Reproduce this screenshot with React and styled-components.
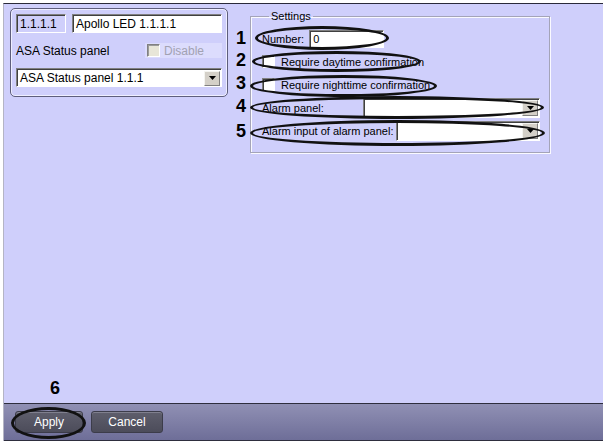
import React from "react"
import styled, { createGlobalStyle } from "styled-components"

const GlobalStyle = createGlobalStyle`
  html, body {
    margin: 0;
    padding: 0;
    background: #fff;
  }
  body {
    font-family: "Liberation Sans", Arial, sans-serif;
    font-size: 11px;
    color: #000;
  }
`

/* --- Frame --- */
const Frame = styled.div`
  margin: 3px 0 0 3px;
  width: 600px;
  height: 438px;
  display: flex;
  flex-direction: column;
  border-top: 1px solid #2a2a3a;
  border-left: 1px solid #b4b4c4;
  box-sizing: border-box;
`
const Main = styled.div`
  flex: 1;
  background: #cfcffb;
  display: flex;
  align-items: flex-start;
  gap: 22px;
  padding: 4px 0 0 6px;
`
const BottomBar = styled.div`
  height: 38px;
  box-sizing: border-box;
  border-top: 1px solid #2e2e3e;
  border-bottom: 1px solid #2e2e3e;
  background: linear-gradient(#9090b4, #6e6e98);
  display: flex;
  align-items: flex-start;
  gap: 8px;
  padding: 7px 0 0 11px;
`

/* --- Object panel (top left) --- */
const ObjectPanel = styled.div`
  width: 218px;
  box-sizing: border-box;
  border: 1px solid #5e5e7c;
  border-radius: 5px;
  box-shadow: inset 0 0 0 1px #eeeeff;
  padding: 5px 5px 9px 5px;
  display: flex;
  flex-direction: column;
  gap: 10px;
`
const PanelRow = styled.div`
  display: flex;
  align-items: center;
  gap: ${p => p.$gap || 0}px;
  justify-content: ${p => p.$between ? "space-between" : "flex-start"};
`
const PanelLabel = styled.span`
  white-space: nowrap;
  font-size: 12px;
`
const TextBox = styled.div`
  width: ${p => p.$w}px;
  height: ${p => p.$h || 19}px;
  box-sizing: border-box;
  background: ${p => p.$readonly ? "#cfcffb" : "#fff"};
  border: 1px solid;
  border-color: #808080 #ffffff #ffffff #808080;
  box-shadow: inset 1px 1px 0 #404040;
  padding: 0 3px;
  display: flex;
  align-items: center;
  white-space: nowrap;
  font-size: ${p => p.$fs || 11}px;
`
const DisableArea = styled.div`
  width: 77px;
  height: 15px;
  background: #dcdcfd;
  display: flex;
  align-items: center;
  gap: 4px;
  padding-left: 2px;
  box-sizing: border-box;
  color: #a2a2b2;
  font-size: 12px;
`
const DisabledCheck = styled.span`
  width: 13px;
  height: 13px;
  box-sizing: border-box;
  background: #e8e6d8;
  border: 1px solid;
  border-color: #808080 #ffffff #ffffff #808080;
  box-shadow: inset 1px 1px 0 #9a9a9a;
`

/* --- Combo --- */
const ComboBox = styled.div`
  width: ${p => p.$w}px;
  height: ${p => p.$h}px;
  box-sizing: border-box;
  background: #fff;
  border: 1px solid;
  border-color: #808080 #ffffff #ffffff #808080;
  box-shadow: inset 1px 1px 0 #404040;
  display: flex;
  align-items: center;
  padding: 1px 1px 0 3px;
  font-size: ${p => p.$fs || 11}px;
`
const ComboText = styled.span`
  flex: 1;
  white-space: nowrap;
`
const DropButton = styled.span`
  width: 16px;
  height: ${p => p.$h}px;
  box-sizing: border-box;
  background: #d4d0c8;
  border: 1px solid;
  border-color: #f4f4f0 #808080 #808080 #f4f4f0;
  display: flex;
  align-items: center;
  justify-content: center;
`

const Combo = ({ width, height, value, fontSize }) =>
<ComboBox $w={width} $h={height} $fs={fontSize}>
  <ComboText>{value}</ComboText>
  <DropButton $h={height - 4}>
    <svg width="7" height="4" viewBox="0 0 7 4">
      <polygon points="0,0 7,0 3.5,4" fill="#000" />
    </svg>
  </DropButton>
</ComboBox>

/* --- Settings group --- */
const Group = styled.fieldset`
  margin: 2px 0 0 0;
  width: 300px;
  box-sizing: border-box;
  border: 1px solid #a4a4b8;
  box-shadow: 1px 1px 0 #fafaff, inset 1px 1px 0 #fafaff;
  padding: 4px 9px 10px 11px;
`
const Legend = styled.legend`
  margin-left: 7px;
  padding: 0 2px;
  font-size: 11px;
  line-height: 13px;
`
const Row = styled.div`
  position: relative;
  height: 23px;
  display: flex;
  align-items: center;
  gap: ${p => p.$gap || 0}px;
  justify-content: ${p => p.$between ? "space-between" : "flex-start"};
`
const CheckBox = styled.span`
  width: 13px;
  height: 13px;
  box-sizing: border-box;
  background: #fff;
  border: 1px solid;
  border-color: #808080 #ffffff #ffffff #808080;
  box-shadow: inset 1px 1px 0 #404040;
  margin-right: 6px;
`
const Label = styled.span`
  white-space: nowrap;
  font-size: 11px;
`

/* --- Annotations --- */
const Mark = styled.span`
  position: absolute;
  left: ${p => p.$l}px;
  top: ${p => p.$t}px;
  font-family: "Liberation Sans", Arial, sans-serif;
  font-weight: bold;
  font-size: 18px;
  line-height: 16px;
  color: #000;
`
const Ellipse = styled.span`
  position: absolute;
  left: ${p => p.$l}px;
  top: ${p => p.$t}px;
  width: ${p => p.$w}px;
  height: ${p => p.$h}px;
  box-sizing: border-box;
  border: 3px solid #111;
  border-radius: 50%;
  pointer-events: none;
`

/* --- Buttons --- */
const ButtonWrap = styled.div`
  position: relative;
`
const Button = styled.button`
  width: ${p => p.$w}px;
  height: 22px;
  box-sizing: border-box;
  border: 1px solid #3c3c4a;
  border-radius: 3px;
  background: linear-gradient(#5e5e6c, #4c4c5a);
  box-shadow: inset 0 1px 0 #80808e;
  color: #fff;
  font-family: "Liberation Sans", Arial, sans-serif;
  font-size: 12px;
  padding: 0;
`

export default function App() {
  return (
    <>
      <GlobalStyle />
      <Frame>
        <Main>
          <ObjectPanel>
            <PanelRow $gap={6}>
              <TextBox $w={50} $readonly $fs={12}>1.1.1.1</TextBox>
              <TextBox $w={150} $fs={12}>Apollo LED 1.1.1.1</TextBox>
            </PanelRow>
            <PanelRow $between>
              <PanelLabel>ASA Status panel</PanelLabel>
              <DisableArea>
                <DisabledCheck />
                Disable
              </DisableArea>
            </PanelRow>
            <Combo width={206} height={19} value="ASA Status panel 1.1.1" fontSize={12} />
          </ObjectPanel>

          <Group>
            <Legend>Settings</Legend>
            <Row $gap={5}>
              <Mark $l={-26} $t={3}>1</Mark>
              <Label>Number:</Label>
              <TextBox $w={75} $h={18}>0</TextBox>
              <Ellipse $l={-7} $t={-1} $w={134} $h={24} />
            </Row>
            <Row>
              <Mark $l={-26} $t={2}>2</Mark>
              <CheckBox />
              <Label>Require daytime confirmation</Label>
              <Ellipse $l={-10} $t={1} $w={169} $h={21} />
            </Row>
            <Row>
              <Mark $l={-26} $t={2}>3</Mark>
              <CheckBox />
              <Label>Require nighttime confirmation</Label>
              <Ellipse $l={-12} $t={2} $w={187} $h={22} />
            </Row>
            <Row $between>
              <Mark $l={-26} $t={2}>4</Mark>
              <Label>Alarm panel:</Label>
              <Combo width={177} height={20} value="" />
              <Ellipse $l={-12} $t={0} $w={294} $h={23} />
            </Row>
            <Row $between>
              <Mark $l={-26} $t={4}>5</Mark>
              <Label>Alarm input of alarm panel:</Label>
              <Combo width={144} height={20} value="" />
              <Ellipse $l={-12} $t={1} $w={295} $h={26} />
            </Row>
          </Group>
        </Main>

        <BottomBar>
          <ButtonWrap>
            <Mark $l={35} $t={-31}>6</Mark>
            <Button $w={68}>Apply</Button>
            <Ellipse $l={-4} $t={-4} $w={75} $h={32} />
          </ButtonWrap>
          <ButtonWrap>
            <Button $w={72}>Cancel</Button>
          </ButtonWrap>
        </BottomBar>
      </Frame>
    </>
  )
}
